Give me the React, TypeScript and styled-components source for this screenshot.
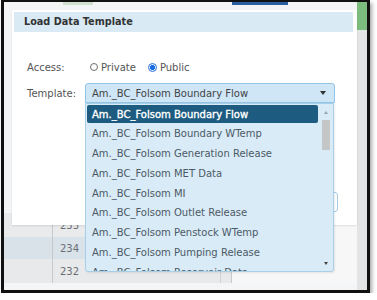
import React from 'react';
import styled, { createGlobalStyle } from 'styled-components';

const GlobalStyle = createGlobalStyle`
  html, body {
    margin: 0;
    padding: 0;
    background: #fff;
  }
  body {
    font-family: "DejaVu Sans", Verdana, sans-serif;
    font-size: 10px;
  }
`;

const Frame = styled.div`
  position: relative;
  margin-left: 1px;
  width: 363px;
  height: 288px;
  border: 3px solid #111;
  border-top-width: 2px;
  box-shadow: 2px 3px 4px rgba(0, 0, 0, 0.35);
  overflow: hidden;
  display: flex;
  background: #f3f4f5;
`;

const Main = styled.div`
  flex: 1;
  display: flex;
  flex-direction: column;
`;

const TopStrip = styled.div`
  height: 8px;
  display: flex;
  align-items: flex-start;
`;

const Tab = styled.div<{ $w: number; $h: number; $color: string }>`
  width: ${(p) => p.$w}px;
  height: ${(p) => p.$h}px;
  background: ${(p) => p.$color};
`;

const PageBody = styled.div`
  flex: 1;
  display: flex;
  flex-direction: column;
  justify-content: flex-end;
  padding-bottom: 7px;
  background: #f4f5f6;
`;

const Row = styled.div<{ $h: number; $bg: string }>`
  height: ${(p) => p.$h}px;
  display: flex;
  background: ${(p) => p.$bg};
`;

const HeadCell = styled.div`
  width: 48px;
  border-right: 1px solid #c5cacf;
`;

const NumCell = styled.div`
  width: 160px;
  padding-left: 7px;
  display: flex;
  align-items: center;
  color: #6a6f74;
  font-size: 10px;
  border-right: 1px solid #cfd3d6;
`;

const GapCell = styled.div`
  width: 10px;
  border-right: 1px solid #c5cacf;
`;

const RestCell = styled.div`
  flex: 1;
  background: #f7f7f7;
`;

const RightRail = styled.div`
  width: 10px;
  display: flex;
  flex-direction: column;
  background: #e3e4e5;
`;

const RailGreen = styled.div`
  height: 28px;
  background: #7cbc7e;
`;

const Modal = styled.div`
  position: absolute;
  left: 8px;
  top: 8px;
  width: 341px;
  height: 211px;
  padding: 2px;
  background: #fff;
  box-shadow: 0 1px 2px rgba(0, 0, 0, 0.1);
  display: flex;
  flex-direction: column;
`;

const Header = styled.div`
  height: 20px;
  margin-right: 2px;
  padding-left: 10px;
  background: #d9eaf5;
  color: #333;
  font-weight: bold;
  font-size: 9.7px;
  line-height: 20px;
`;

const Form = styled.div`
  flex: 1;
  padding: 25px 0 0 13px;
  display: flex;
  flex-direction: column;
  gap: 6px;
`;

const FormRow = styled.div`
  height: 20px;
  display: flex;
  align-items: center;
`;

const Label = styled.div`
  width: 58px;
  color: #555;
`;

const RadioOption = styled.label`
  display: flex;
  align-items: center;
  margin-left: 5px;
  margin-right: 7px;
  color: #555;
`;

const RadioDot = styled.span<{ $on?: boolean }>`
  width: ${(p) => (p.$on ? 9 : 8)}px;
  height: ${(p) => (p.$on ? 9 : 8)}px;
  box-sizing: border-box;
  border-radius: 50%;
  margin-right: 3px;
  border: 1px solid ${(p) => (p.$on ? '#2a74dc' : '#6d6d6d')};
  background: ${(p) =>
    p.$on ? 'radial-gradient(circle, #1a6fe0 0 45%, #e8f0fc 55%)' : '#fff'};
`;

const SelectWrap = styled.div`
  position: relative;
  width: 250px;
`;

const SelectBox = styled.div`
  height: 20px;
  box-sizing: border-box;
  border: 1px solid #93c5e8;
  border-radius: 3px 3px 0 0;
  background: #cfe6f6;
  color: #444;
  padding: 0 8px 0 6px;
  display: flex;
  align-items: center;
  justify-content: space-between;
`;

const Caret = styled.span`
  width: 0;
  height: 0;
  border-left: 3px solid transparent;
  border-right: 3px solid transparent;
  border-top: 4px solid #333;
`;

const DropList = styled.div`
  position: absolute;
  left: 0;
  top: 100%;
  z-index: 5;
  width: 249px;
  height: 169px;
  box-sizing: border-box;
  border: 1px solid #a9cfe7;
  border-radius: 0 0 3px 3px;
  background: #d9ebf6;
  padding: 1px;
  display: flex;
  overflow: hidden;
  box-shadow: 1px 1px 2px rgba(0, 0, 0, 0.08);
`;

const Items = styled.div`
  width: 231px;
  display: flex;
  flex-direction: column;
`;

const Item = styled.div<{ $active?: boolean }>`
  flex: none;
  height: 18px;
  margin-bottom: 1.8px;
  padding-left: 5px;
  border-radius: 2px;
  display: flex;
  align-items: center;
  white-space: nowrap;
  color: ${(p) => (p.$active ? '#fff' : '#4c5a66')};
  background: ${(p) => (p.$active ? '#1d5b80' : 'transparent')};
  -webkit-text-stroke: ${(p) => (p.$active ? '0.35px #fff' : '0')};
`;

const ScrollBar = styled.div`
  width: 12px;
  margin-left: 2px;
  display: flex;
  flex-direction: column;
  align-items: center;
`;

const ScrollArrow = styled.div<{ $up?: boolean }>`
  height: 14px;
  display: flex;
  align-items: center;
  justify-content: center;
  &::after {
    content: '';
    border-left: 2.5px solid transparent;
    border-right: 2.5px solid transparent;
    ${(p) => (p.$up ? 'border-bottom' : 'border-top')}: 3px solid ${(p) => (p.$up ? '#9aa4ab' : '#444')};
  }
`;

const Thumb = styled.div`
  width: 8px;
  height: 30px;
  margin-top: 1px;
  background: #c4c6c8;
`;

const Spacer = styled.div`
  flex: 1;
`;

const Footer = styled.div`
  display: flex;
  justify-content: flex-end;
  padding: 0 17px 11px 0;
`;

const Button = styled.div`
  width: 50px;
  height: 20px;
  box-sizing: border-box;
  border: 1px solid #a8cbe3;
  border-radius: 3px;
  background: #fff;
  color: #456;
  display: flex;
  align-items: center;
  justify-content: center;
`;

const templates = [
  'Am._BC_Folsom Boundary Flow',
  'Am._BC_Folsom Boundary WTemp',
  'Am._BC_Folsom Generation Release',
  'Am._BC_Folsom MET Data',
  'Am._BC_Folsom MI',
  'Am._BC_Folsom Outlet Release',
  'Am._BC_Folsom Penstock WTemp',
  'Am._BC_Folsom Pumping Release',
  'Am._BC_Folsom Reservoir Data',
];

const rows = [
  { n: '233', h: 24, bg: '#e9eaeb' },
  { n: '234', h: 22, bg: '#d9e1e9' },
  { n: '232', h: 24, bg: '#e8e9ea' },
];

const App = () => {
  return (
    <>
      <GlobalStyle />
      <Frame>
        <Main>
          <TopStrip>
            <Tab $w={59} $h={3} $color="#f3f4f5" />
            <Tab $w={30} $h={3} $color="#cfe0cf" />
            <Tab $w={139} $h={0} $color="transparent" />
            <Tab $w={56} $h={3} $color="#2b5e9d" />
          </TopStrip>
          <PageBody>
            {rows.map((r) => (
              <Row key={r.n} $h={r.h} $bg={r.bg}>
                <HeadCell />
                <NumCell>{r.n}</NumCell>
                <GapCell />
                <RestCell />
              </Row>
            ))}
          </PageBody>
        </Main>
        <RightRail>
          <RailGreen />
        </RightRail>

        <Modal>
          <Header>Load Data Template</Header>
          <Form>
            <FormRow>
              <Label>Access:</Label>
              <RadioOption>
                <RadioDot />
                Private
              </RadioOption>
              <RadioOption>
                <RadioDot $on />
                Public
              </RadioOption>
            </FormRow>
            <FormRow>
              <Label>Template:</Label>
              <SelectWrap>
                <SelectBox>
                  <span>{templates[0]}</span>
                  <Caret />
                </SelectBox>
                <DropList>
                  <Items>
                    {templates.map((t, i) => (
                      <Item key={t} $active={i === 0}>
                        {t}
                      </Item>
                    ))}
                  </Items>
                  <ScrollBar>
                    <ScrollArrow $up />
                    <Thumb />
                    <Spacer />
                    <ScrollArrow />
                  </ScrollBar>
                </DropList>
              </SelectWrap>
            </FormRow>
          </Form>
          <Footer>
            <Button>Load</Button>
          </Footer>
        </Modal>
      </Frame>
    </>
  );
};

export default App;
